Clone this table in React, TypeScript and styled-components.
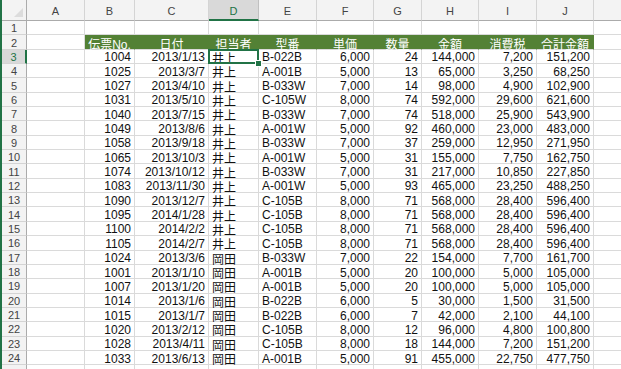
import React from 'react'
import styled, { createGlobalStyle, css } from 'styled-components'

const GlobalStyle = createGlobalStyle`
    html, body {
        margin: 0;
        padding: 0;
        background: #fff;
        overflow: hidden;
    }
    body {
        font-family: "Liberation Sans", "Noto Sans CJK JP", sans-serif;
    }
`

const GREEN = '#217346'
const HEAD_GREEN = '#538135'

const Sheet = styled.div`
    display: grid;
    grid-template-columns: 25px 58px 50px 74px 50px 58px 57px 48px 57px 58px 57px 40px;
    grid-template-rows: 21px;
    grid-auto-rows: 14.35px;
    width: 621px;
    height: 369px;
    overflow: hidden;
    box-sizing: border-box;
    border-left: 2px solid ${GREEN};
`

const Corner = styled.div`
    position: relative;
    background: #f3f3f3;
    border-right: 1px solid #ababab;
    border-bottom: 1px solid #ababab;
    &::after {
        content: '';
        position: absolute;
        right: 3px;
        bottom: 3px;
        width: 0;
        height: 0;
        border-left: 9px solid transparent;
        border-bottom: 9px solid #dcdcdc;
    }
`

const ColHead = styled.div<{ $active?: boolean }>`
    display: flex;
    align-items: center;
    justify-content: center;
    background: #f3f3f3;
    border-right: 1px solid #d4d4d4;
    border-bottom: 1px solid #ababab;
    font-size: 11px;
    color: #444;
    padding-top: 2px;
    ${p => p.$active && css`
        background: #d9d9d9;
        color: ${GREEN};
        border-bottom: 2px solid ${GREEN};
        border-right-color: #c0c0c0;
    `}
`

const RowHead = styled.div<{ $active?: boolean }>`
    display: flex;
    align-items: center;
    justify-content: center;
    background: #f3f3f3;
    border-right: 1px solid #ababab;
    border-bottom: 1px solid #d4d4d4;
    font-size: 11px;
    color: #444;
    padding-top: 1px;
    ${p => p.$active && css`
        background: #d9d9d9;
        color: ${GREEN};
        border-right: 2px solid ${GREEN};
    `}
`

const Cell = styled.div<{ $align?: 'left' | 'right' | 'center'; $head?: boolean; $selected?: boolean }>`
    display: flex;
    align-items: center;
    justify-content: ${p => p.$align === 'right' ? 'flex-end' : p.$align === 'center' ? 'center' : 'flex-start'};
    padding: 2px 3px 0;
    border-right: 1px solid #dadada;
    border-bottom: 1px solid #dadada;
    font-size: 12px;
    color: #111;
    white-space: nowrap;
    overflow: visible;
    ${p => p.$head && css`
        background: ${HEAD_GREEN};
        border-right-color: ${HEAD_GREEN};
        color: #fff;
    `}
    ${p => p.$selected && css`
        position: relative;
        z-index: 2;
        &::before {
            content: '';
            position: absolute;
            left: -1px;
            top: -1px;
            right: -1px;
            bottom: -1px;
            border: 2px solid ${GREEN};
        }
        &::after {
            content: '';
            position: absolute;
            right: -4px;
            bottom: -4px;
            width: 5px;
            height: 5px;
            background: ${GREEN};
            border: 1px solid #fff;
        }
    `}
`

const cols = ['A', 'B', 'C', 'D', 'E', 'F', 'G', 'H', 'I', 'J', '']
const heads = ['伝票No.', '日付', '担当者', '型番', '単価', '数量', '金額', '消費税', '合計金額']
const aligns: ('left' | 'right')[] = ['right', 'right', 'left', 'left', 'right', 'right', 'right', 'right', 'right']

const rows: string[][] = [
    ['1004', '2013/1/13', '井上', 'B-022B', '6,000', '24', '144,000', '7,200', '151,200'],
    ['1025', '2013/3/7', '井上', 'A-001B', '5,000', '13', '65,000', '3,250', '68,250'],
    ['1027', '2013/4/10', '井上', 'B-033W', '7,000', '14', '98,000', '4,900', '102,900'],
    ['1031', '2013/5/10', '井上', 'C-105W', '8,000', '74', '592,000', '29,600', '621,600'],
    ['1040', '2013/7/15', '井上', 'B-033W', '7,000', '74', '518,000', '25,900', '543,900'],
    ['1049', '2013/8/6', '井上', 'A-001W', '5,000', '92', '460,000', '23,000', '483,000'],
    ['1058', '2013/9/18', '井上', 'B-033W', '7,000', '37', '259,000', '12,950', '271,950'],
    ['1065', '2013/10/3', '井上', 'A-001W', '5,000', '31', '155,000', '7,750', '162,750'],
    ['1074', '2013/10/12', '井上', 'B-033W', '7,000', '31', '217,000', '10,850', '227,850'],
    ['1083', '2013/11/30', '井上', 'A-001W', '5,000', '93', '465,000', '23,250', '488,250'],
    ['1090', '2013/12/7', '井上', 'C-105B', '8,000', '71', '568,000', '28,400', '596,400'],
    ['1095', '2014/1/28', '井上', 'C-105B', '8,000', '71', '568,000', '28,400', '596,400'],
    ['1100', '2014/2/2', '井上', 'C-105B', '8,000', '71', '568,000', '28,400', '596,400'],
    ['1105', '2014/2/7', '井上', 'C-105B', '8,000', '71', '568,000', '28,400', '596,400'],
    ['1024', '2013/3/6', '岡田', 'B-033W', '7,000', '22', '154,000', '7,700', '161,700'],
    ['1001', '2013/1/10', '岡田', 'A-001B', '5,000', '20', '100,000', '5,000', '105,000'],
    ['1007', '2013/1/20', '岡田', 'A-001B', '5,000', '20', '100,000', '5,000', '105,000'],
    ['1014', '2013/1/6', '岡田', 'B-022B', '6,000', '5', '30,000', '1,500', '31,500'],
    ['1015', '2013/1/7', '岡田', 'B-022B', '6,000', '7', '42,000', '2,100', '44,100'],
    ['1020', '2013/2/12', '岡田', 'C-105B', '8,000', '12', '96,000', '4,800', '100,800'],
    ['1028', '2013/4/11', '岡田', 'C-105B', '8,000', '18', '144,000', '7,200', '151,200'],
    ['1033', '2013/6/13', '岡田', 'A-001B', '5,000', '91', '455,000', '22,750', '477,750'],
]

const BlankRow = ({ n }: { n?: number }) => (
    <>
        <RowHead>{n}</RowHead>
        {cols.map((_, i) => <Cell key={i} />)}
    </>
)

const App = () => {
    return (
        <>
            <GlobalStyle />
            <Sheet>
                <Corner />
                {cols.map((c, i) => <ColHead key={i} $active={c === 'D'}>{c}</ColHead>)}

                <BlankRow n={1} />

                <RowHead>2</RowHead>
                <Cell />
                {heads.map(h => <Cell key={h} $head $align="center">{h}</Cell>)}
                <Cell />

                {rows.map((r, ri) => (
                    <React.Fragment key={ri}>
                        <RowHead $active={ri === 0}>{ri + 3}</RowHead>
                        <Cell />
                        {r.map((v, ci) => (
                            <Cell key={ci} $align={aligns[ci]} $selected={ri === 0 && ci === 2}>{v}</Cell>
                        ))}
                        <Cell />
                    </React.Fragment>
                ))}

                {/* row 25 only shows as a sliver at the bottom edge */}
                <BlankRow />
            </Sheet>
        </>
    )
}

export default App
